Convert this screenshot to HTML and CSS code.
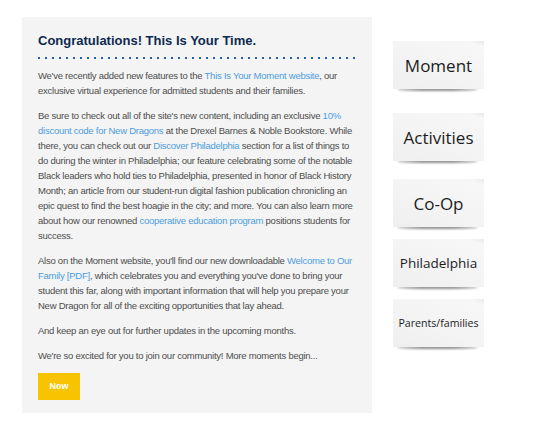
FILE: index.html
```html
<!DOCTYPE html>
<html lang="en">
<head>
    <meta charset="UTF-8">
    <title>Congratulations! This Is Your Time.</title>

    <link rel="stylesheet" href="styles.css">
</head>
<body>

<div class="page">
    <div class="letter">
        <h1 class="letter-title">Congratulations! This Is Your Time.</h1>
        <div class="dots"></div>

        <p>We've recently added new features to the <a href="#">This Is Your Moment website</a>, our exclusive virtual experience for admitted students and their families.</p>

        <p>Be sure to check out all of the site's new content, including an exclusive <a href="#">10% discount code for New Dragons</a> at the Drexel Barnes &amp; Noble Bookstore. While there, you can check out our <a href="#">Discover Philadelphia</a> section for a list of things to do during the winter in Philadelphia; our feature celebrating some of the notable Black leaders who hold ties to Philadelphia, presented in honor of Black History Month; an article from our student-run digital fashion publication chronicling an epic quest to find the best hoagie in the city; and more. You can also learn more about how our renowned <a href="#">cooperative education program</a> positions students for success.</p>

        <p>Also on the Moment website, you'll find our new downloadable <a href="#">Welcome to Our Family [PDF]</a>, which celebrates you and everything you've done to bring your student this far, along with important information that will help you prepare your New Dragon for all of the exciting opportunities that lay ahead.</p>

        <p>And keep an eye out for further updates in the upcoming months.</p>

        <p>We're so excited for you to join our community! More moments begin...</p>

        <a class="now-btn" href="#">Now</a>
    </div>

    <div class="tiles">
        <a class="tile tile-moment" href="#">Moment</a>
        <a class="tile tile-activities" href="#">Activities</a>
        <a class="tile tile-coop" href="#">Co-Op</a>
        <a class="tile tile-philly" href="#">Philadelphia</a>
        <a class="tile tile-parents" href="#">Parents/families</a>
    </div>
</div>

</body>
</html>
```

FILE: styles.css
```css
body {
    margin: 0;
    background: #fff;
    font: 9.5px/15px "Liberation Sans", Arial, sans-serif;
    letter-spacing: -0.25px;
}

.page {
    display: flex;
    align-items: flex-start;
    padding: 17px 0 0 22px;
}

.letter {
    width: 318px;
    background: #f4f4f4;
    padding: 15px 16px 13px;
    color: #4d4d4d;
}

.letter-title {
    margin: 0;
    font-size: 13px;
    line-height: 18px;
    font-weight: bold;
    letter-spacing: 0;
    color: #0e2a50;
}

.dots {
    height: 2px;
    margin: 7px 0 9px;
    background-image: linear-gradient(to right, #2160b0 2px, transparent 2px);
    background-size: 7px 2px;
}

.letter p {
    margin: 0 0 10px;
}

.letter p a {
    color: #4d9ce0;
    text-decoration: none;
}

.now-btn {
    display: block;
    width: 42px;
    height: 27px;
    line-height: 27px;
    text-align: center;
    background: #f8c300;
    color: #fff;
    font-weight: bold;
    font-size: 9px;
    letter-spacing: 0;
    text-decoration: none;
}

.tiles {
    display: flex;
    flex-direction: column;
    margin: 24px 0 0 21px;
    letter-spacing: 0;
}

.tile {
    position: relative;
    width: 91px;
    height: 48px;
    display: flex;
    align-items: center;
    justify-content: center;
    margin-top: 12px;
    background: linear-gradient(200deg, #e9e9ea 0%, #f7f7f8 8%, #f3f3f4 60%, #efeff0 100%);
    font-family: "Open Sans", sans-serif;
    color: #1c1c1c;
    text-decoration: none;
}

/* curled shadow under each tile */
.tile::after {
    content: "";
    position: absolute;
    left: 4px;
    right: 6px;
    bottom: -2px;
    height: 3px;
    border-radius: 50%;
    background: rgba(0, 0, 0, 0.45);
    filter: blur(1px);
    z-index: -1;
}

.tile-moment {
    margin-top: 0;
    font-size: 17px;
}

.tile-activities {
    margin-top: 24px;
    font-size: 17px;
}

.tile-coop {
    margin-top: 18px;
    font-size: 17px;
}

.tile-philly {
    font-size: 13.5px;
}

.tile-parents {
    font-size: 10.6px;
}
```
